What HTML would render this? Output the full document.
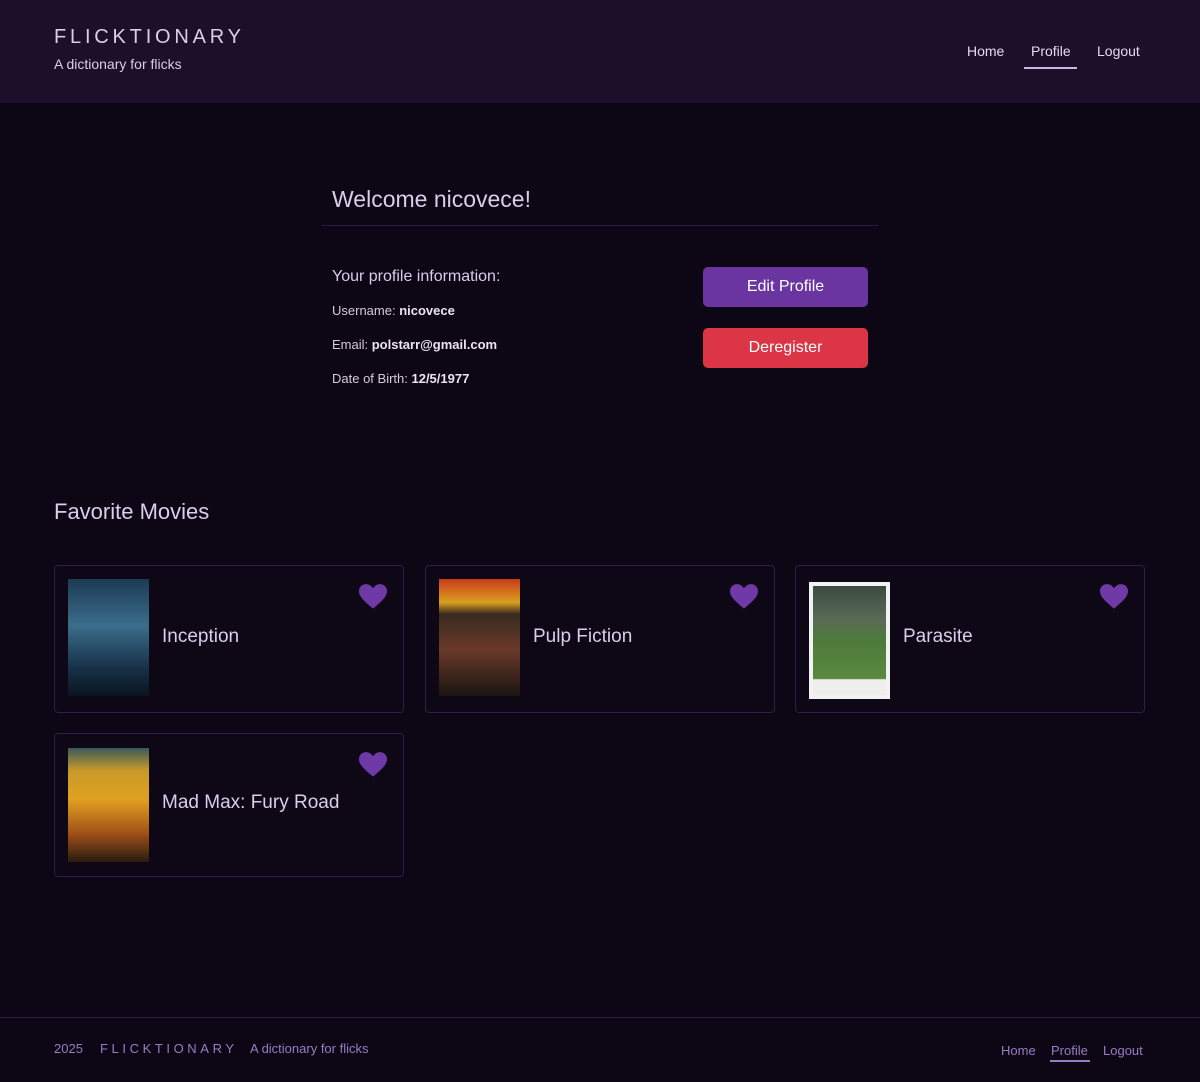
<!DOCTYPE html>
<html><head><meta charset="utf-8"><style>
*{margin:0;padding:0;box-sizing:border-box}
body{width:1200px;height:1082px;background:#0c0615;font-family:"Liberation Sans",sans-serif;color:#ddd0ea;position:relative;overflow:hidden}
header{position:absolute;left:0;top:0;width:1200px;height:103px;background:#1b0f29}
.logo{position:absolute;left:54px;top:26px;font-size:20px;letter-spacing:3.8px;color:#dccdeb}
.tag{position:absolute;left:54px;top:56px;font-size:14px;color:#dccdeb}
.nav a{position:absolute;top:43px;font-size:14px;color:#e6dcef;text-decoration:none}
.ul{position:absolute;height:2px;background:#cbb8e0}
h2{position:absolute;left:332px;top:186px;font-size:23px;font-weight:normal;color:#dccdeb}
.hr{position:absolute;left:322px;top:225px;width:556px;height:1px;background:#2c1c44}
.t{position:absolute;left:332px;font-size:13px;color:#d6cbe0}
.t b{color:#ece4f4}
.btn{position:absolute;left:703px;width:165px;height:40px;border-radius:5px;color:#fff;font-size:16px;text-align:center;line-height:40px}
h3{position:absolute;left:54px;top:499px;font-size:22px;font-weight:normal;color:#dccdeb}
.card{position:absolute;width:350px;border:1px solid #2d1f45;border-radius:4px;background:#0d0716}
.p{position:absolute;left:13px;width:81px;height:117px}
.ct{position:absolute;left:107px;font-size:19px;color:#dccdeb}
.h{position:absolute;right:16px;top:18px}
footer{position:absolute;left:0;top:1017px;width:1200px;height:65px;border-top:1px solid #2c1c44}
.f{position:absolute;top:23px;font-size:13px;color:#9a7cc4}
</style></head><body>
<header>
<div class="logo">FLICKTIONARY</div>
<div class="tag">A dictionary for flicks</div>
<div class="nav"><a style="left:967px">Home</a><a style="left:1031px">Profile</a><a style="left:1097px">Logout</a></div>
<div class="ul" style="left:1024px;top:67px;width:53px"></div>
</header>
<h2>Welcome nicovece!</h2>
<div class="hr"></div>
<div class="t" style="top:268px;font-size:16px;color:#dccdeb">Your profile information:</div>
<div class="t" style="top:303px">Username: <b>nicovece</b></div>
<div class="t" style="top:337px">Email: <b>polstarr@gmail.com</b></div>
<div class="t" style="top:371px">Date of Birth: <b>12/5/1977</b></div>
<div class="btn" style="top:267px;background:#6a35a0">Edit Profile</div>
<div class="btn" style="top:328px;background:#dc3545">Deregister</div>
<h3>Favorite Movies</h3>

<div class="card" style="left:54px;top:565px;height:148px">
<div class="p" style="top:13px;background:linear-gradient(180deg,#1c3a55,#3b6d8a 40%,#18324a 75%,#0a1420)"></div>
<div class="ct" style="top:60px">Inception</div>
<svg class="h" width="28" height="26" viewBox="0 0 24 22"><path d="M12 21C5 15 0 11 0 6 0 2.5 2.7 0 6 0c2.5 0 4.5 1.5 6 3.5C13.5 1.5 15.5 0 18 0c3.3 0 6 2.5 6 6 0 5-5 9-12 15z" fill="#6f3aa8"/></svg>
</div>
<div class="card" style="left:425px;top:565px;height:148px">
<div class="p" style="top:13px;background:linear-gradient(180deg,#c83a1a 0,#d9a020 20%,#3a2a20 30%,#6a3a2a 60%,#1a1410)"></div>
<div class="ct" style="top:60px">Pulp Fiction</div>
<svg class="h" width="28" height="26" viewBox="0 0 24 22"><path d="M12 21C5 15 0 11 0 6 0 2.5 2.7 0 6 0c2.5 0 4.5 1.5 6 3.5C13.5 1.5 15.5 0 18 0c3.3 0 6 2.5 6 6 0 5-5 9-12 15z" fill="#6f3aa8"/></svg>
</div>
<div class="card" style="left:795px;top:565px;height:148px">
<div class="p" style="top:16px;border:4px solid #f2f2f2;background:linear-gradient(180deg,#3a4a40 0,#5a6a58 30%,#4d7a3a 50%,#5a8a40 85%,#eee 86%)"></div>
<div class="ct" style="top:60px">Parasite</div>
<svg class="h" width="28" height="26" viewBox="0 0 24 22"><path d="M12 21C5 15 0 11 0 6 0 2.5 2.7 0 6 0c2.5 0 4.5 1.5 6 3.5C13.5 1.5 15.5 0 18 0c3.3 0 6 2.5 6 6 0 5-5 9-12 15z" fill="#6f3aa8"/></svg>
</div>
<div class="card" style="left:54px;top:733px;height:144px">
<div class="p" style="top:14px;height:114px;background:linear-gradient(180deg,#3a5a5a 0,#c89a2a 20%,#e0a020 45%,#a05018 75%,#2a1a10)"></div>
<div class="ct" style="top:58px">Mad Max: Fury Road</div>
<svg class="h" width="28" height="26" viewBox="0 0 24 22"><path d="M12 21C5 15 0 11 0 6 0 2.5 2.7 0 6 0c2.5 0 4.5 1.5 6 3.5C13.5 1.5 15.5 0 18 0c3.3 0 6 2.5 6 6 0 5-5 9-12 15z" fill="#6f3aa8"/></svg>
</div>

<footer>
<div class="f" style="left:54px">2025</div>
<div class="f" style="left:100px;letter-spacing:3.6px">FLICKTIONARY</div>
<div class="f" style="left:250px">A dictionary for flicks</div>
<div class="f" style="left:1001px;top:25px">Home</div>
<div class="f" style="left:1051px;top:25px">Profile</div>
<div class="f" style="left:1103px;top:25px">Logout</div>
<div class="ul" style="left:1050px;top:42px;width:40px;background:#9a7cc4"></div>
</footer>
</body></html>
